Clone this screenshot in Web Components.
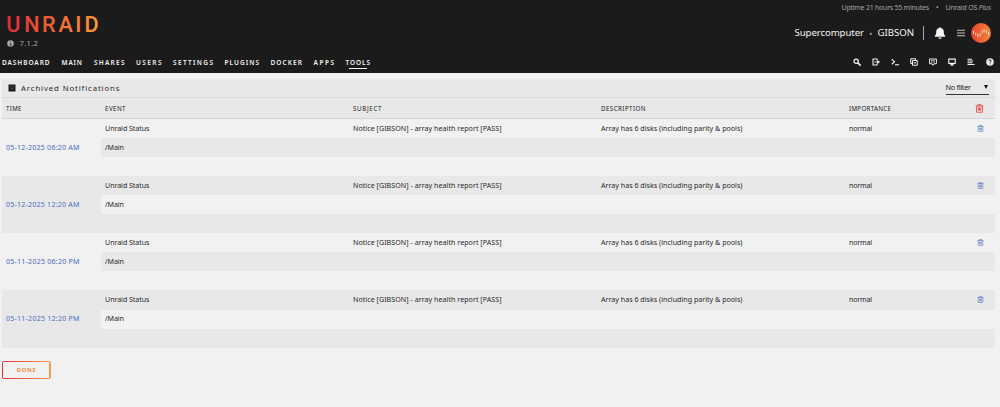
<!DOCTYPE html>
<html lang="en">
<head>
<meta charset="utf-8">
<title>Archived Notifications</title>
<style>
html,body{margin:0;height:100%;background:#f1f1f1}
body{font-family:"Noto Sans","Open Sans",sans-serif;color:#282829;overflow:hidden}
</style>
</head>
<body>
<unraid-app></unraid-app>
<script>
const define = (name, html) => customElements.define(name, class extends HTMLElement {
  connectedCallback() {
    if (this.shadowRoot) return;
    const t = document.createElement('template');
    t.innerHTML = typeof html === 'function' ? html(this) : html;
    this.attachShadow({mode: 'open'}).append(t.content.cloneNode(true));
  }
});

// Single line label tracked out to the width given in its "w" attribute.
define('fit-label', el => `<style>:host{display:block;flex:none;width:${el.getAttribute('w')}px;white-space:nowrap;line-height:1.4}span{display:inline-block}</style><span><slot></slot></span>`);

const glyphs = {
  search: '<circle cx="6.3" cy="6.3" r="4.3" fill="none" stroke="currentColor" stroke-width="2.500"/><path d="M9.8 9.8l4.400 4.400" stroke="currentColor" stroke-width="3.200" stroke-linecap="round"/>',
  exit: '<path d="M10 4.500V2H2v12h8v-2.500" fill="none" stroke="currentColor" stroke-width="2.200"/><path d="M5 6.800h5.500V3.500L16 8l-5.500 4.500V9.200H5z" fill="currentColor"/>',
  term: '<path d="M1.500 2.500L7 7.500l-5.500 5" fill="none" stroke="currentColor" stroke-width="2.200"/><path d="M8 13.500h8" stroke="currentColor" stroke-width="2.200"/>',
  copy: '<path d="M11 4V1.500H1.500V11H4M5 5h9.500v9.500H5z" fill="none" stroke="currentColor" stroke-width="2"/><path d="M7.200 9.700h5" stroke="currentColor" stroke-width="2"/>',
  chat: '<path d="M1.200 2h13.600v9.500h-5L8 14.500l-1.800-3h-5z" fill="none" stroke="currentColor" stroke-width="2"/><path d="M4 5.200h8M4 8.200h8" stroke="currentColor" stroke-width="1.600" stroke-dasharray="3.300 .8"/>',
  screen: '<path d="M1.500 2.300h13v8.500h-13z" fill="none" stroke="currentColor" stroke-width="2.200"/><path d="M6 11h4v2h2v2H4v-2h2z" fill="currentColor"/>',
  log: '<path d="M1 2.500h9M1 6h11M1 9.500h10M1 13h14" stroke="currentColor" stroke-width="2.200"/>',
  help: '<circle cx="8" cy="8" r="7.500" fill="currentColor"/><path d="M5.700 6.300c0-3.300 4.800-3.100 4.600-.3-.1 1.500-2.200 1.600-2.200 3.400M8.100 11v1.700" fill="none" stroke="#1c1b1b" stroke-width="1.900"/>',
  info: '<circle cx="8" cy="8" r="7.500" fill="currentColor"/><path d="M6.300 7H8.500v5M6 12h4.500M7.300 4h1.700" fill="none" stroke="#1c1b1b" stroke-width="1.500"/>',
  bell: '<path d="M8 .2c.8 0 1.100.5 1.100 1.100 2.800.6 4 2.700 4 5.200 0 3 .7 4 1.900 5.300v1.300H1v-1.300C2.200 10.500 2.900 9.500 2.900 6.500c0-2.500 1.200-4.600 4-5.200C6.900.7 7.200.2 8 .2zM5.800 13.900h4.400C10 16.500 6 16.500 5.800 13.900z" fill="currentColor"/>',
  menu: '<path d="M0 2.500h16M0 8h16M0 13.500h16" stroke="currentColor" stroke-width="1.900"/>',
  trash: '<path d="M1 3.500h14M5.200 3.500V1.200h5.600v2.300M2.800 3.500v11.200h10.400V3.500M6 6v6M8 6v6M10 6v6" fill="none" stroke="currentColor" stroke-width="1.500"/>',
  box: '<path d="M1 1h14v14H1z" fill="#1c1b1b"/><path d="M1 4.800h14" stroke="#555" stroke-width=".8"/><path d="M5 7.500l3 2.500 3-2.500" fill="none" stroke="#777" stroke-width="1.200"/>'
};
define('ui-icon', el => `<style>:host{display:block;flex:none;width:${el.getAttribute('size')}px;height:${el.getAttribute('size')}px}svg{display:block;width:100%;height:100%}</style><svg viewBox="0 0 16 16">${glyphs[el.getAttribute('name')]}</svg>`);

define('user-avatar', `<style>:host{display:block;flex:none;width:20px;height:20px;border-radius:50%;background:linear-gradient(90deg,#e5432d,#f5863a)}svg{display:block}</style>
<svg width="20" height="20" viewBox="0 0 20 20"><path d="M2.500 8v2.500M4.700 10v2.500M6.900 11v3M9.100 10.500v2.500M11.100 7.500v2.500M13.100 6.500v2.500M15.300 7.500v2.500M17.500 9.500v2.500" stroke="#fbd6c4" stroke-width="1" stroke-linecap="round"/></svg>`);

define('brand-logo', `<style>:host{display:block;height:31px;width:96px}svg{display:block}text{font:500 22.500px Roboto,sans-serif}</style>
<svg width="96" height="31"><defs><linearGradient id="g" gradientUnits="userSpaceOnUse" x1="0" x2="96" y1="0" y2="0"><stop stop-color="#e22c34"/><stop offset="1" stop-color="#ff9a37"/></linearGradient></defs><text transform="scale(.96 1)" y="24" x="-.8 18 36.500 53.700 71.200 80.700" fill="url(#g)">UNRAID</text></svg>`);

define('site-header', `<style>
:host{display:block;box-sizing:border-box;height:72.500px;background:#1c1b1b;color:#f2f2f2}
.top{display:flex;justify-content:space-between;height:52px}
.brand{padding:8px 0 0 7px}
.ver{display:flex;align-items:center;gap:5.500px;height:8px;color:#a9a9a9;font-size:7.700px}
.right{display:flex;flex-direction:column;align-items:flex-end;padding-right:9px}
.up{display:flex;align-items:center;height:15px;font-size:7px;color:#a3a3a3}
.up .d{width:16.500px;text-align:center}
.who{display:flex;align-items:center;height:20px;margin-top:8px;font-size:9.700px}
.who .d{width:13.500px;text-align:center;font-size:8px;color:#aaa}
.bar{width:1px;height:14px;background:#aaa;margin:0 10.500px 0 8.500px}
nav{display:flex;height:20px;align-items:center;justify-content:space-between}
.links{display:flex;padding:1px 0 0 2px;font-size:6.500px;font-weight:600}
.links fit-label{position:relative}
.on::after{content:"";position:absolute;left:3.500px;right:3px;bottom:-1.500px;height:1px;background:#f2f2f2}
.tools{display:flex;gap:11.020px;padding-right:6px;color:#eee}
</style>
<div class="top">
 <div class="brand"><brand-logo></brand-logo><div class="ver"><ui-icon name="info" size="7"></ui-icon><fit-label w="18.5">7.1.2</fit-label></div></div>
 <div class="right">
  <div class="up"><fit-label w="87.5">Uptime 21 hours 55 minutes</fit-label><span class="d">•</span><fit-label w="45.5">Unraid OS <i>Plus</i></fit-label></div>
  <div class="who"><fit-label w="69.5">Supercomputer</fit-label><span class="d">•</span><fit-label w="36.5">GIBSON</fit-label><span class="bar"></span><ui-icon name="bell" size="12"></ui-icon><ui-icon name="menu" size="8" style="margin:0 6px 0 11px;color:#ccc"></ui-icon><user-avatar></user-avatar></div>
 </div>
</div>
<nav>
 <div class="links">
  <fit-label w="47.5" style="margin-right:12px">DASHBOARD</fit-label>
  <fit-label w="20.5" style="margin-right:12px">MAIN</fit-label>
  <fit-label w="30.5" style="margin-right:11.500px">SHARES</fit-label>
  <fit-label w="25.5" style="margin-right:11.500px">USERS</fit-label>
  <fit-label w="40" style="margin-right:11.500px">SETTINGS</fit-label>
  <fit-label w="34.5" style="margin-right:11.500px">PLUGINS</fit-label>
  <fit-label w="31.5" style="margin-right:11.500px">DOCKER</fit-label>
  <fit-label w="20.5" style="margin-right:11.500px">APPS</fit-label>
  <fit-label w="24.5" class="on">TOOLS</fit-label>
 </div>
 <div class="tools">${['search','exit','term','copy','chat','screen','log','help'].map(n => `<ui-icon name="${n}" size="8"></ui-icon>`).join('')}</div>
</nav>`);

define('filter-select', `<style>:host{display:flex;box-sizing:border-box;width:43px;height:15px;justify-content:space-between;align-items:center;border-bottom:1px solid #333;font-size:7.300px;color:#222}i{border:2px solid transparent;border-top:4px solid #111;border-bottom:0;margin-right:.5px}</style><fit-label w="25.5">No filter</fit-label><i></i>`);

define('title-bar', el => `<style>:host{display:flex;box-sizing:border-box;height:19.500px;align-items:center;background:#e8e8e8;border-bottom:1px solid #d9d9d9;padding:0 6px;font-size:7.800px}filter-select{margin-left:auto}ui-icon{margin-right:5px}.h{padding-top:1.200px}</style><ui-icon name="box" size="8"></ui-icon><fit-label class="h" w="98.5">${el.getAttribute('label')}</fit-label><filter-select></filter-select>`);

define('table-head', `<style>:host{display:grid;grid-template-columns:99px 248px 248px 248px 1fr;box-sizing:border-box;height:21px;align-items:center;background:#e8e8e8;border-bottom:1px solid #d6d6d6;padding:2.500px 0 0 4px;font-size:6.200px;color:#222}.l{display:flex;justify-content:space-between;align-items:center;padding-right:11px}ui-icon{margin-top:-1px}</style>
<fit-label w="15.5">TIME</fit-label><fit-label w="20.5">EVENT</fit-label><fit-label w="28.5">SUBJECT</fit-label><fit-label w="44.5">DESCRIPTION</fit-label><div class="l"><fit-label w="42">IMPORTANCE</fit-label><ui-icon name="trash" size="9" style="color:#e8423b"></ui-icon></div>`);

define('notice-row', el => `<style>
:host{display:grid;grid-template-columns:99px 1fr;height:57.170px;font-size:7.100px;background:var(--a)}
.t{display:flex;align-items:center;padding-left:4px;color:#4c6cc0}
.b{display:grid;grid-template-rows:repeat(3,1fr)}
.r{display:grid;grid-template-columns:248px 248px 248px 1fr;align-items:center;padding-left:4px}
.m{background:var(--b);display:flex;align-items:center;padding-left:4px}
.l{display:flex;justify-content:space-between;align-items:center;padding-right:11px}
</style>
<div class="t"><fit-label w="73.5">${el.getAttribute('time')}</fit-label></div>
<div class="b"><div class="r"><fit-label w="44.5">Unraid Status</fit-label><fit-label w="148.5">Notice [GIBSON] - array health report [PASS]</fit-label><fit-label w="141.500">Array has 6 disks (including parity &amp; pools)</fit-label><div class="l"><fit-label w="23">normal</fit-label><ui-icon name="trash" size="7" style="color:#5c78c4"></ui-icon></div></div>
<div class="m"><fit-label w="19">/Main</fit-label></div></div>`);

define('gradient-button', el => `<style>:host{display:flex;box-sizing:border-box;width:48.500px;height:18px;align-items:center;justify-content:center;border-radius:2.500px;padding:1.300px;background:linear-gradient(#f1f1f1,#f1f1f1) content-box,linear-gradient(90deg,#e03237,#f99a4c);color:#f28a45;font-size:5.800px;font-weight:700}</style><fit-label w="19">${el.getAttribute('label')}</fit-label>`);

define('unraid-app', `<style>:host{display:block}
main{display:block;padding:6px 5.500px 0 2px}
notice-row{--a:#f1f1f1;--b:#e8e8e8}notice-row:nth-of-type(even){--a:#e8e8e8;--b:#f1f1f1}
gradient-button{margin-top:13.500px}</style>
<site-header></site-header>
<main><title-bar label="Archived Notifications"></title-bar><table-head></table-head>
<notice-row time="05-12-2025 06:20 AM"></notice-row><notice-row time="05-12-2025 12:20 AM"></notice-row><notice-row time="05-11-2025 06:20 PM"></notice-row><notice-row time="05-11-2025 12:20 PM"></notice-row>
<gradient-button label="DONE"></gradient-button></main>`);

// Track every label once all enclosing elements carry their styles.
const fit = root => root.querySelectorAll('*').forEach(e => {
  if (e.localName === 'fit-label') {
    const s = e.shadowRoot.querySelector('span');
    s.style.letterSpacing = ((+e.getAttribute('w') - s.getBoundingClientRect().width) / (e.textContent.length - 1)).toFixed(4) + 'px';
  }
  if (e.shadowRoot) fit(e.shadowRoot);
});
fit(document);
</script>
</body>
</html>
